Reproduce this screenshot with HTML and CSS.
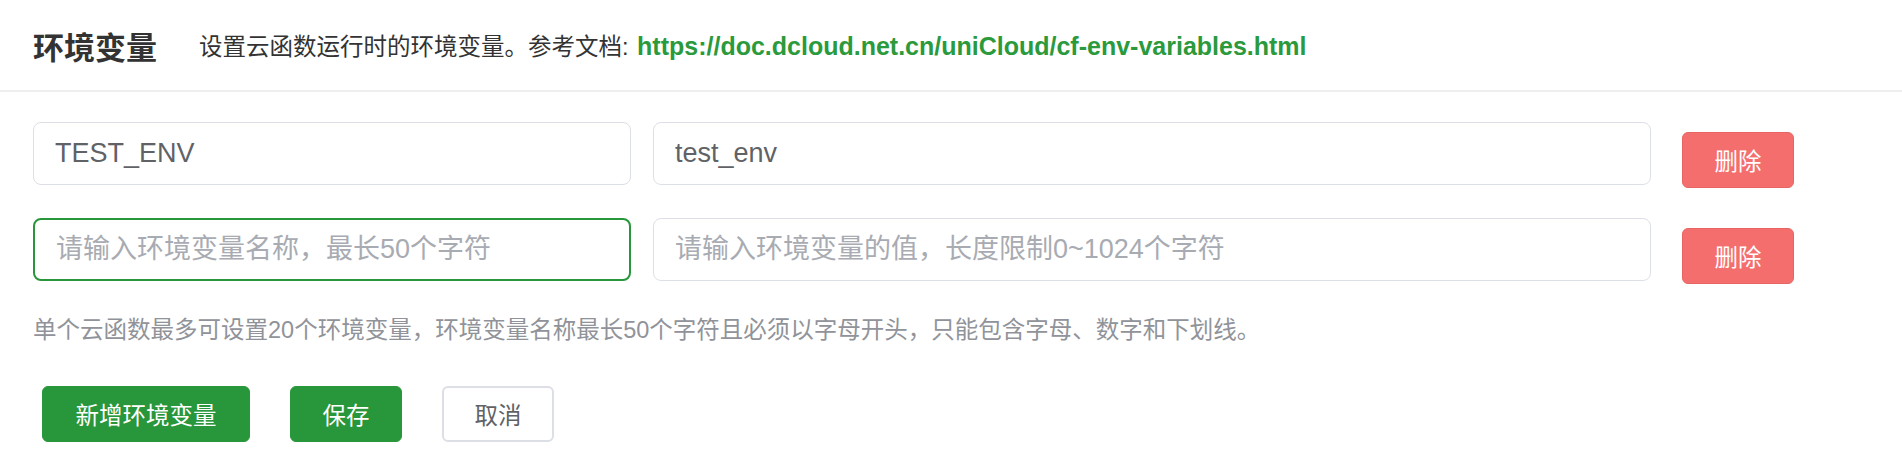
FILE: index.html
```html
<!DOCTYPE html>
<html lang="zh-CN">
<head>
    <meta charset="UTF-8">
    <meta name="viewport" content="width=device-width, initial-scale=1.0">
    <title>环境变量</title>
    <link rel="stylesheet" href="styles.css">
</head>
<body>
    <!-- Intestazione -->
    <div class="header">
        <h2 class="title">环境变量</h2>
        <span class="desc">设置云函数运行时的环境变量。参考文档: <a class="doc-link" href="#">https://doc.dcloud.net.cn/uniCloud/cf-env-variables.html</a></span>
    </div>

    <div class="content">
        <!-- Righe delle variabili -->
        <div class="env-row">
            <input class="env-input env-key" type="text" value="TEST_ENV" placeholder="请输入环境变量名称，最长50个字符">
            <input class="env-input env-value" type="text" value="test_env" placeholder="请输入环境变量的值，长度限制0~1024个字符">
            <button class="btn btn-danger">删除</button>
        </div>

        <div class="env-row">
            <input class="env-input env-key is-focus" type="text" placeholder="请输入环境变量名称，最长50个字符">
            <input class="env-input env-value" type="text" placeholder="请输入环境变量的值，长度限制0~1024个字符">
            <button class="btn btn-danger">删除</button>
        </div>

        <p class="tip">单个云函数最多可设置20个环境变量，环境变量名称最长50个字符且必须以字母开头，只能包含字母、数字和下划线。</p>

        <div class="actions">
            <button class="btn btn-primary btn-wide">新增环境变量</button>
            <button class="btn btn-primary">保存</button>
            <button class="btn btn-default">取消</button>
        </div>
    </div>
</body>
</html>
```

FILE: styles.css
```css
body {
    margin: 0;
    font-family: "Liberation Sans", "Noto Sans CJK SC", sans-serif;
    color: #333;
    background: #fff;
}
.header {
    display: flex;
    align-items: center;
    height: 90px;
    padding-left: 33px;
    border-bottom: 2px solid #eeeeee;
}
.title {
    margin: 0;
    font-size: 31px;
    font-weight: bold;
    color: #333;
}
.desc {
    margin-left: 42px;
    font-size: 23.5px;
    color: #333;
}
.doc-link {
    margin-left: 2px;
    font-size: 25px;
    font-weight: bold;
    color: #2a9a3c;
    text-decoration: none;
}
.content {
    padding: 30px 33px 0;
}
.env-row {
    display: flex;
    align-items: flex-start;
    margin-bottom: 30px;
}
.env-input {
    box-sizing: border-box;
    height: 63px;
    padding: 0 21px;
    border: 1.5px solid #dcdfe6;
    border-radius: 8px;
    font-family: inherit;
    font-size: 27px;
    color: #606266;
    outline: none;
}
.env-input::placeholder {
    color: #a8abb2;
}
.env-key {
    width: 598px;
}
.env-value {
    width: 998px;
    margin-left: 22px;
}
.is-focus {
    border: 2px solid #28963a;
}
.btn {
    box-sizing: border-box;
    height: 56px;
    width: 112px;
    border-radius: 6px;
    font-family: inherit;
    font-size: 23.5px;
    cursor: pointer;
}
.btn-danger {
    margin-left: 31px;
    margin-top: 10px;
    background-color: #f46e6e;
    border: 1px solid #e86464;
    color: #fff;
}
.btn-primary {
    background-color: #28963a;
    border: 1px solid #28963a;
    color: #fff;
}
.btn-default {
    background-color: #fff;
    border: 2px solid #dcdfe6;
    color: #606266;
}
.btn-wide {
    width: 208px;
}
.tip {
    margin: 0;
    line-height: 32px;
    font-size: 23.5px;
    color: #909399;
}
.actions {
    display: flex;
    gap: 40px;
    margin-top: 40px;
    padding-left: 9px;
}
```
